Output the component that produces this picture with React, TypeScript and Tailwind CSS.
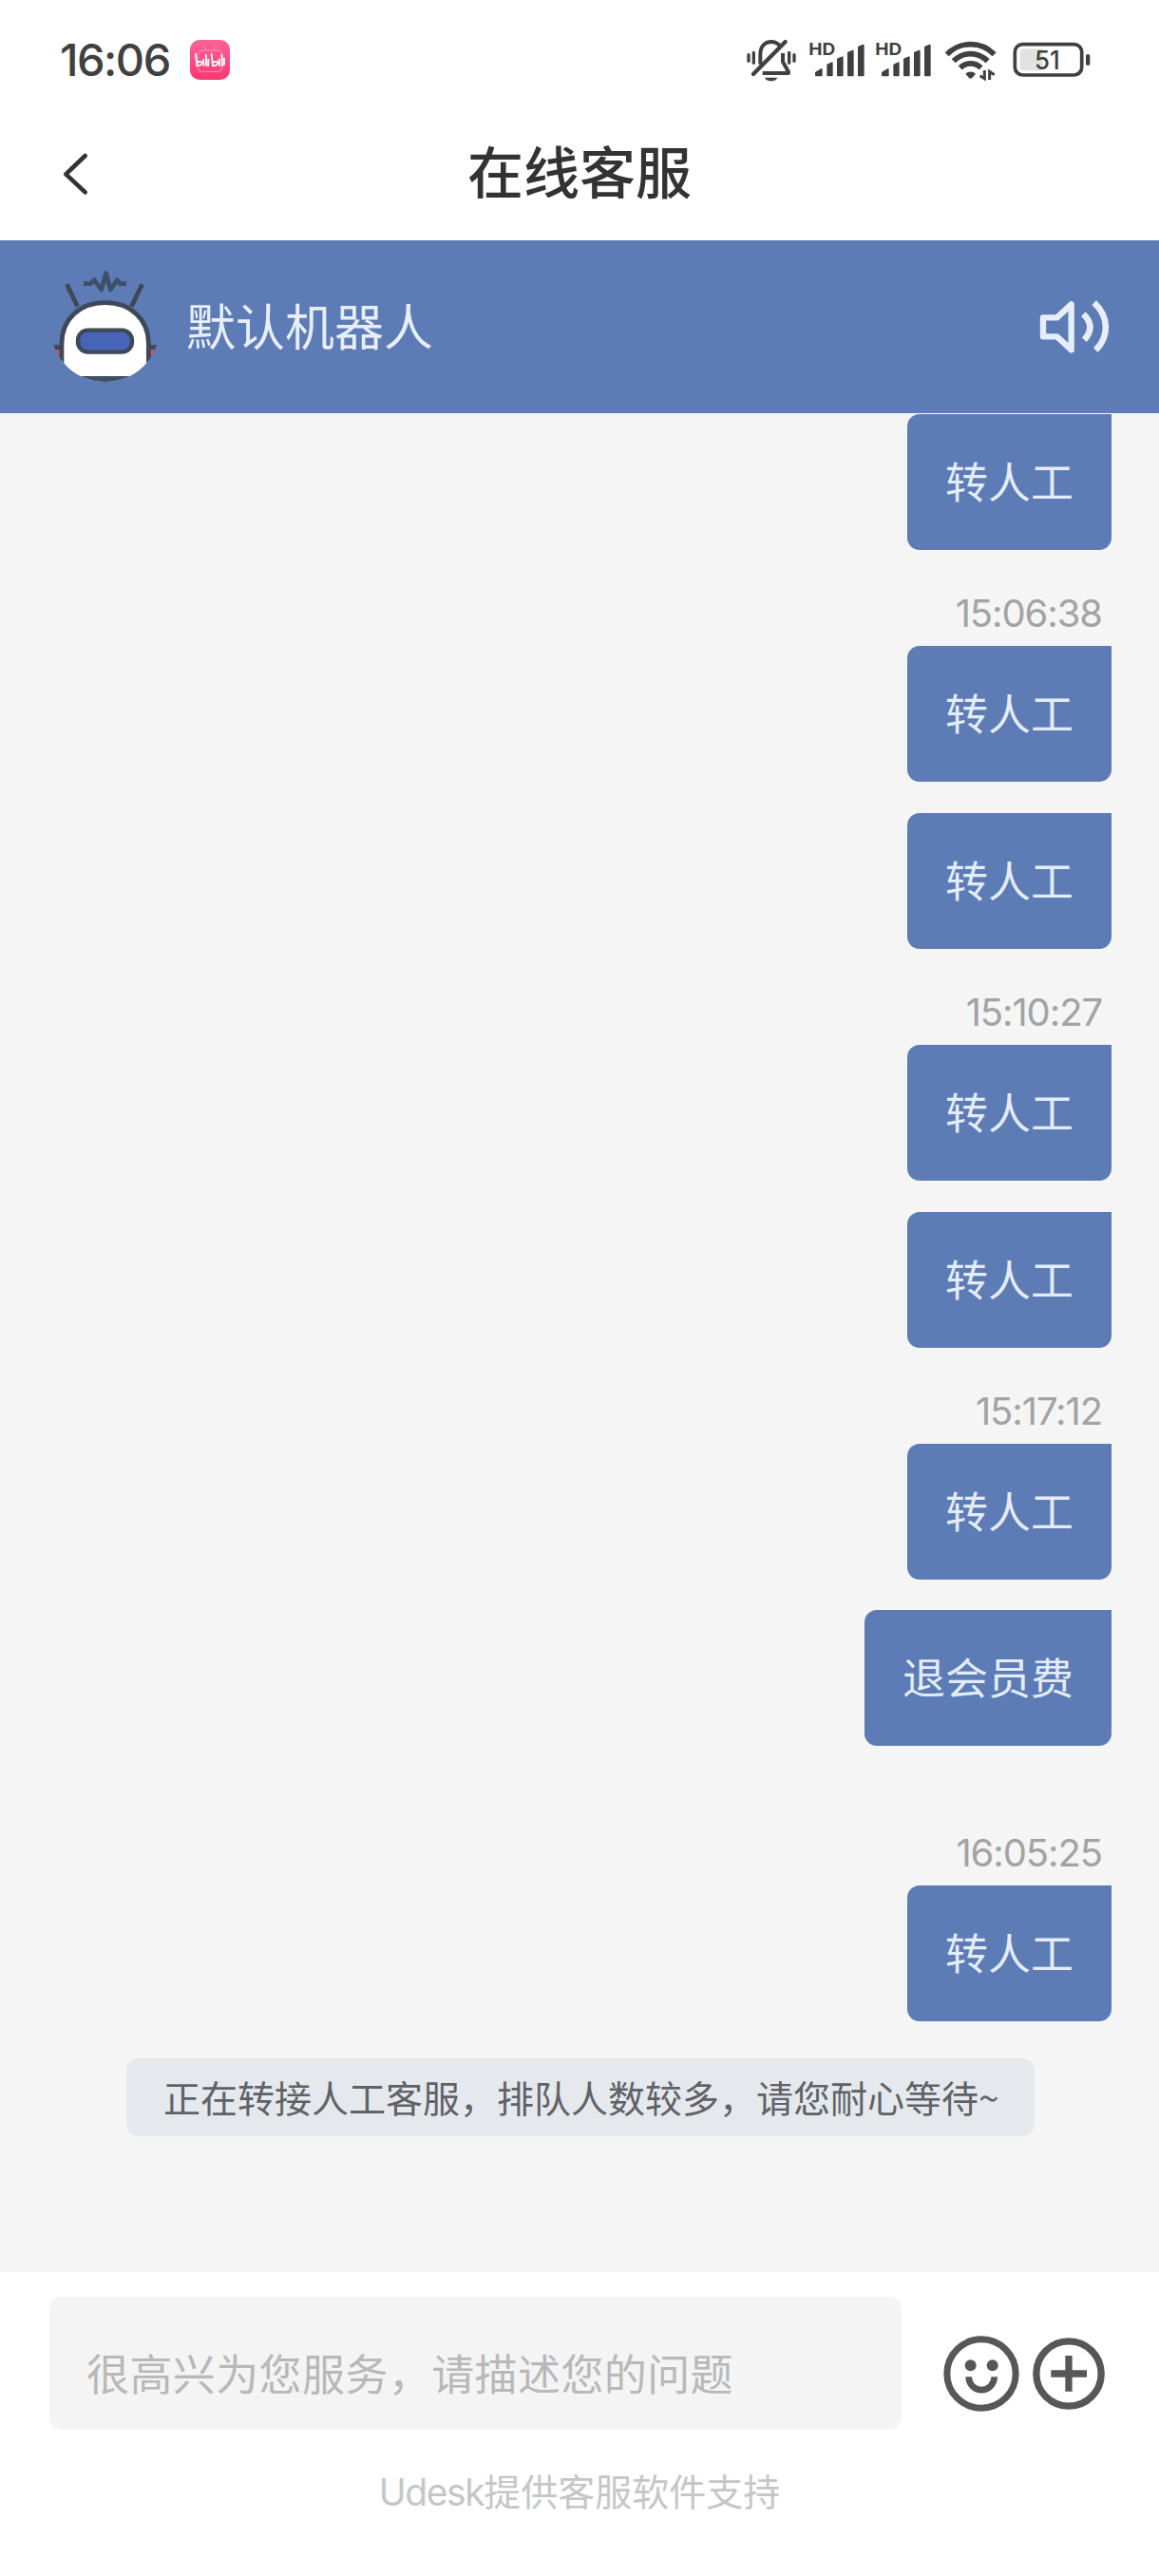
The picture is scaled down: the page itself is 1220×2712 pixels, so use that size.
import React from "react";

const LATIN = "font-['Inter','Noto_Sans_CJK_SC',sans-serif]";

function AppBadge() {
  return (
    <svg className="h-[42px] w-[42px]" viewBox="0 0 126 126">
      <defs>
        <linearGradient id="pink" x1="0" y1="0" x2="0" y2="1">
          <stop offset="0" stopColor="#fa6298" />
          <stop offset="1" stopColor="#fb3873" />
        </linearGradient>
      </defs>
      <rect width="126" height="126" rx="30" fill="url(#pink)" />
      <g fill="none" stroke="#fb82ac" strokeWidth="4" strokeLinecap="round">
        <rect x="25" y="33" width="77" height="67" rx="14" />
        <path d="M43 20l9 11M83 20l-9 11" />
      </g>
      <g fill="none" stroke="#fff" strokeWidth="5.500" strokeLinecap="round" strokeLinejoin="round">
        <path d="M18 45l4 37c9 0 16-4 16-9 0-5-7-6-16-2" />
        <path d="M42 62l2 19M50 47l2 34M58 62v19" />
        <path d="M68 45l4 37c9 0 16-4 16-9 0-5-7-6-16-2" />
        <path d="M92 62l2 19M100 47l2 34M108 58v20" />
      </g>
    </svg>
  );
}

function MutedBell() {
  return (
    <svg className="h-[47px] w-[54px]" viewBox="45 60 162 141" fill="none" stroke="#404040">
      <g strokeWidth="10" strokeLinecap="round">
        <path d="M54 113v20M70 106v33M182 106v33M198 113v20" />
      </g>
      <path d="M91 143V112c0-25 14-40 34-40 13 0 22 5 28 14" strokeWidth="12" />
      <path d="M162 108v27l18 32v4H98" strokeWidth="12" strokeLinejoin="round" />
      <path d="M69 174L170 72" strokeWidth="13" strokeLinecap="round" />
      <path d="M105 185h40c-4 8-11 11-20 11s-16-3-20-11z" fill="#404040" stroke="none" />
    </svg>
  );
}

function Signal() {
  return (
    <svg className="h-[47px] w-[60px]" viewBox="243 60 180 141" fill="#404040">
      <text x="244" y="114" fontFamily="Inter" fontSize="54" fontWeight="700" textLength="84" lengthAdjust="spacingAndGlyphs">
        HD
      </text>
      <g stroke="#404040" strokeWidth="6" strokeLinejoin="round">
        <path d="M267 170l17-11v19h-17zM304 145l13-6v39h-13zM336 127l14-6v57h-14zM369 107l14-6v77h-14zM402 89l14-6v95h-14z" />
      </g>
    </svg>
  );
}

function Wifi() {
  return (
    <svg className="h-[47px] w-[57px]" viewBox="669 60 171 141" fill="none" stroke="#404040">
      <g strokeWidth="17">
        <path d="M680 112C722 69 788 69 830 112" />
        <path d="M701 133C732 102 778 102 809 133" />
        <path d="M722 154C741 136 769 136 788 154" />
      </g>
      <path d="M739 173c9-9 23-9 32 0l-11 13q-5 5-10 0z" fill="#404040" stroke="none" />
      <path d="M799 162v26l-14-9M815 192v-26l15 10" strokeWidth="9" />
    </svg>
  );
}

function Battery() {
  return (
    <svg className="h-[47px] w-[84px]" viewBox="885 60 252 141">
      <rect x="895" y="80" width="211" height="97" rx="24" fill="#fff" stroke="#404040" strokeWidth="11" />
      <path d="M925 94h57v69h-57q-14 0-14-14v-41q0-14 14-14z" fill="#e2e2e2" />
      <rect x="1119" y="111" width="13" height="36" rx="6" fill="#404040" />
      <text x="957" y="158" fill="#404040" fontFamily="Inter" fontSize="80" fontWeight="450" textLength="80" lengthAdjust="spacingAndGlyphs">
        51
      </text>
    </svg>
  );
}

function Robot() {
  return (
    <svg className="h-[120px] w-[110px]" viewBox="165 105 330 360" fill="none">
      <defs>
        <clipPath id="avatar">
          <ellipse cx="332" cy="294" rx="170" ry="165" />
        </clipPath>
      </defs>
      <g clipPath="url(#avatar)">
        <path d="M166 342h26v70h-26z" fill="#3d4859" />
        <path d="M470 342h26v70h-26z" fill="#3d4859" />
        <path d="M172 358h16v32h-16zM476 358h16v32h-16z" fill="#d0586a" />
        <path d="M195 480V338c0-78 58-129 137-129s137 51 137 129v142z" fill="#fff" stroke="#3d4859" strokeWidth="14" />
        <path d="M195 441h274v30H195z" fill="#3d5064" />
      </g>
      <path d="M211 151l34 70M449 151l-34 70" stroke="#3d4859" strokeWidth="14" />
      <path
        d="M264 149h22l12-12 22 31 15-52 14 52 21-31 10 12h19"
        stroke="#3d4f69"
        strokeWidth="14"
        strokeLinejoin="round"
      />
      <rect x="246" y="296" width="171" height="69" rx="32" fill="#4864b8" stroke="#3d4859" strokeWidth="13" />
    </svg>
  );
}

function Speaker() {
  return (
    <svg className="h-[60px] w-[76px]" viewBox="160 100 228 180" fill="none" stroke="#e6eefb">
      <path d="M175 161h44l45-42v144l-45-42h-44z" strokeWidth="19" strokeLinejoin="round" />
      <path d="M302 150c28 26 28 54 3 81M336 114c48 44 48 108 5 150" strokeWidth="20" />
    </svg>
  );
}

function Smile() {
  return (
    <svg className="h-20 w-20" viewBox="0 0 240 240" fill="none" stroke="#575757">
      <circle cx="120" cy="120" r="108.500" strokeWidth="21" />
      <path d="M80 130a40 41 0 0 0 81 0" strokeWidth="20" />
      <circle cx="86" cy="94" r="18" fill="#575757" stroke="none" />
      <circle cx="155" cy="94" r="18" fill="#575757" stroke="none" />
    </svg>
  );
}

function Plus() {
  return (
    <svg className="h-[76px] w-[76px]" viewBox="0 0 228 228" fill="none" stroke="#575757">
      <circle cx="114" cy="114" r="102.500" strokeWidth="22" />
      <path d="M58 114h113M114 57v113" strokeWidth="22" />
    </svg>
  );
}

function Bubble({ text, className = "" }: { text: string; className?: string }) {
  return (
    <div
      className={`h-[143px] shrink-0 rounded-[13px] rounded-tr-none bg-[#5d7bb4] px-10 text-[45px] leading-[145px] text-[#e3ecfb] ${className}`}
    >
      {text}
    </div>
  );
}

function Time({ text, className }: { text: string; className: string }) {
  return (
    <div
      className={`mr-[10px] h-[68px] shrink-0 text-[40px] leading-[68px] tracking-[-1.1px] text-[#a3a3a3] ${className}`}
    >
      {text}
    </div>
  );
}

export default function App() {
  return (
    <div className={`flex h-[2712px] w-[1220px] flex-col overflow-hidden bg-white ${LATIN}`}>
      <div className="flex h-[126px] shrink-0 items-center pr-[71px] pl-[63px]">
        <span className="w-[137px] text-[47px] font-medium tracking-[-1.5px] text-[#404040]">16:06</span>
        <AppBadge />
        <div className="ml-auto flex items-center">
          <MutedBell />
          <div className="ml-3 flex gap-[10px]">
            <Signal />
            <Signal />
          </div>
          <div className="ml-3 flex gap-[15px]">
            <Wifi />
            <Battery />
          </div>
        </div>
      </div>

      <header className="grid h-[127px] shrink-0 grid-cols-[1fr_auto_1fr] items-start">
        <svg className="mt-[34px] ml-[66px] h-[46px] w-[28px]" viewBox="0 0 84 138" fill="none" stroke="#333">
          <path d="M71 12L10 70l61 57" strokeWidth="14" strokeLinecap="round" strokeLinejoin="round" />
        </svg>
        <h1 className="mt-[17px] text-[59px] leading-[80px] font-medium text-[#333]">在线客服</h1>
      </header>

      <div className="flex h-[182px] shrink-0 items-center bg-[#5d7bb4] pr-[51px] pl-[55px]">
        <Robot />
        <span className="mt-[4px] ml-[31px] text-[52px] leading-[70px] text-[#e6eefb]">默认机器人</span>
        <div className="ml-auto">
          <Speaker />
        </div>
      </div>

      <main className="flex h-[1957px] shrink-0 flex-col items-end bg-[#f5f5f5] pt-px pr-[50px]">
        <Bubble text="转人工" />
        <Time text="15:06:38" className="mt-[33px]" />
        <Bubble text="转人工" />
        <Bubble text="转人工" className="mt-[33px]" />
        <Time text="15:10:27" className="mt-[33px]" />
        <Bubble text="转人工" />
        <Bubble text="转人工" className="mt-[33px]" />
        <Time text="15:17:12" className="mt-[33px]" />
        <Bubble text="转人工" />
        <Bubble text="退会员费" className="mt-[32px]" />
        <Time text="16:05:25" className="mt-[79px]" />
        <Bubble text="转人工" />
        <div className="mt-[39px] mr-[81px] h-[82px] w-[956px] shrink-0 rounded-[13px] bg-[#e5e9ed] pl-[39px] font-['Noto_Sans_CJK_SC',sans-serif] text-[39px] leading-[81px] whitespace-nowrap text-[#606266]">
          正在转接人工客服，排队人数较多，请您耐心等待~
        </div>
      </main>

      <footer className="flex h-[320px] shrink-0 flex-col bg-white pt-[26px]">
        <div className="flex pl-[52px]">
          <div className="h-[140px] w-[897px] rounded-[13px] bg-[#f4f4f4] pl-[39px] text-[45px] leading-[165px] tracking-[0.4px] text-[#b8b8b8]">
            很高兴为您服务，请描述您的问题
          </div>
          <div className="mt-[41px] ml-[44px] flex h-20 items-center gap-[14px]">
            <Smile />
            <Plus />
          </div>
        </div>
        <p className="mt-[38px] text-center text-[39px] leading-[56px] text-[#c6c6c6]">
          <span className="tracking-[-1.4px]">Udesk</span>提供客服软件支持
        </p>
      </footer>
    </div>
  );
}
